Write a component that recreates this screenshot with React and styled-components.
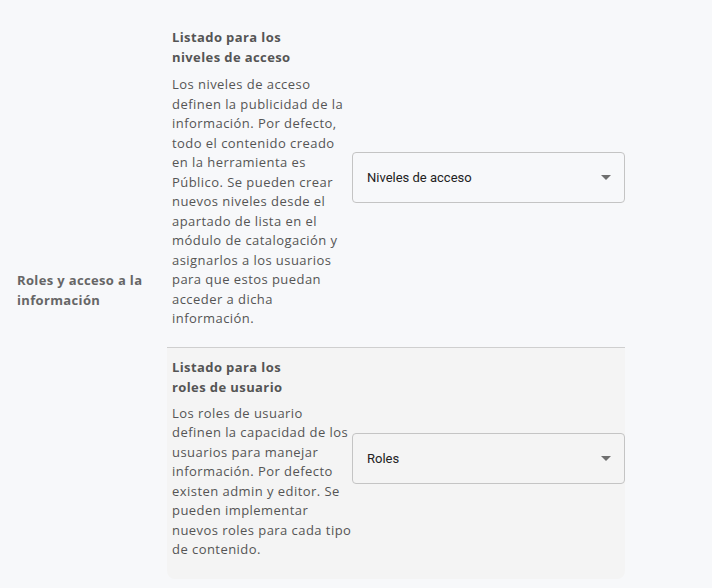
import React from "react";
import styled, { createGlobalStyle } from "styled-components";

const Global = createGlobalStyle`
  html, body { margin: 0; padding: 0; background: #f7f8fa; }
  body { font-family: "Open Sans", sans-serif; }
`;

const Page = styled.div`
  width: 712px;
  height: 588px;
  background: #f7f8fa;
  display: flex;
  align-items: stretch;
  box-sizing: border-box;
`;

const LabelCol = styled.div`
  width: 167px;
  box-sizing: border-box;
  padding: 0 20px 0 17px;
  display: flex;
  align-items: center;
  height: 579px;
`;

const SectionLabel = styled.div`
  font-family: "Open Sans", sans-serif;
  font-weight: 700;
  font-size: 13px;
  line-height: 20px;
  letter-spacing: 0.35px;
  color: #666;
  padding-top: 1px;
`;

const Blocks = styled.div`
  width: 458px;
  padding-top: 17px;
  display: flex;
  flex-direction: column;
`;

const Block = styled.div`
  display: flex;
  align-items: center;
  padding: ${(p) => (p.$shaded ? "9px 0 19px 5px" : "10px 0 18px 5px")};
  background: ${(p) => (p.$shaded ? "#f4f4f4" : "transparent")};
  border-top: ${(p) => (p.$shaded ? "1px solid #cfcfcf" : "none")};
  border-radius: ${(p) => (p.$shaded ? "0 0 8px 8px" : "0")};
`;

const TextCol = styled.div`
  width: 180px;
  flex: none;
  box-sizing: border-box;
  color: #555;
  font-size: 13px;
`;

const Title = styled.div`
  font-weight: 700;
  line-height: 20px;
  letter-spacing: 0.4px;
  margin-bottom: ${(p) => (p.$shaded ? "7px" : "8px")};
`;

const Body = styled.p`
  margin: 0;
  line-height: 19.5px;
  letter-spacing: 0.45px;
`;

const Line = styled.span`
  display: block;
  white-space: nowrap;
`;

const Select = styled.div`
  flex: 1;
  height: 51px;
  box-sizing: border-box;
  border: 1px solid #c4c4c4;
  border-radius: 4px;
  display: flex;
  align-items: center;
  padding: 0 13px 0 14px;
  font-family: Roboto, sans-serif;
  font-size: 13px;
  color: #222;
`;

const SelectText = styled.span`
  flex: 1;
`;

const Arrow = styled.span`
  width: 0;
  height: 0;
  border-left: 5px solid transparent;
  border-right: 5px solid transparent;
  border-top: 5px solid #6f6f6f;
`;

const blocks = [
  {
    title: ["Listado para los", "niveles de acceso"],
    body: [
      "Los niveles de acceso",
      "definen la publicidad de la",
      "información. Por defecto,",
      "todo el contenido creado",
      "en la herramienta es",
      "Público. Se pueden crear",
      "nuevos niveles desde el",
      "apartado de lista en el",
      "módulo de catalogación y",
      "asignarlos a los usuarios",
      "para que estos puedan",
      "acceder a dicha",
      "información.",
    ],
    select: "Niveles de acceso",
  },
  {
    title: ["Listado para los", "roles de usuario"],
    body: [
      "Los roles de usuario",
      "definen la capacidad de los",
      "usuarios para manejar",
      "información. Por defecto",
      "existen admin y editor. Se",
      "pueden implementar",
      "nuevos roles para cada tipo",
      "de contenido.",
    ],
    select: "Roles",
    shaded: true,
  },
];

export default function App() {
  return (
    <>
      <Global />
      <Page>
        <LabelCol>
          <SectionLabel>Roles y acceso a la información</SectionLabel>
        </LabelCol>
        <Blocks>
          {blocks.map((b, i) => (
            <Block key={i} $shaded={b.shaded}>
              <TextCol>
                <Title $shaded={b.shaded}>
                  {b.title.map((t) => (
                    <Line key={t}>{t}</Line>
                  ))}
                </Title>
                <Body>
                  {b.body.map((t, j) => (
                    <Line key={j}>{t}</Line>
                  ))}
                </Body>
              </TextCol>
              <Select>
                <SelectText>{b.select}</SelectText>
                <Arrow />
              </Select>
            </Block>
          ))}
        </Blocks>
      </Page>
    </>
  );
}
